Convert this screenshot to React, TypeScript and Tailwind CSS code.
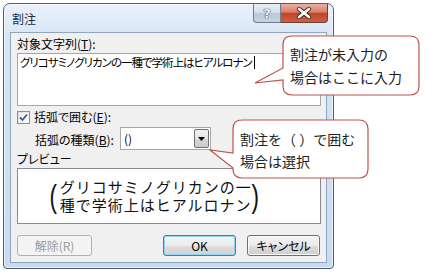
const jp = "font-['Noto_Sans_CJK_JP',sans-serif]"

const Callout1 = () => (
  <div className="absolute left-[254px] top-[35px] w-[167px] h-[62px]">
    <svg width="167" height="62" className="absolute left-0 top-0">
      <path
        d="M38 1 H156 Q165 1 165 10 V51 Q165 60 156 60 H38 Q29 60 29 51 V45 L1 48 L29 33 V10 Q29 1 38 1 Z"
        fill="#fff"
        stroke="#c0504d"
        strokeWidth="1.2"
      />
    </svg>
    <div className="absolute left-[36px] top-[8px] text-[14px] leading-[23px] text-[#222] whitespace-nowrap">
      <div>割注が未入力の</div>
      <div>場合はここに入力</div>
    </div>
  </div>
)

const Callout2 = () => (
  <div className="absolute left-[209px] top-[119px] w-[161px] h-[61px]">
    <svg width="161" height="61" className="absolute left-0 top-0">
      <path
        d="M33 1 H150 Q159 1 159 10 V50 Q159 59 150 59 H33 Q24 59 24 50 V49 L1 31 L24 34 V10 Q24 1 33 1 Z"
        fill="#fff"
        stroke="#c0504d"
        strokeWidth="1.2"
      />
    </svg>
    <div className="absolute left-[31px] top-[9px] text-[14px] leading-[22px] text-[#222] whitespace-nowrap">
      <div>割注を（ ）で囲む</div>
      <div>場合は選択</div>
    </div>
  </div>
)

const TitleButtons = () => (
  <div className="ml-auto mr-[5px] flex">
    <div className="w-[28px] h-[19px] border border-t-0 border-[#6b7c93] rounded-bl-[4px] bg-[linear-gradient(180deg,#eaeff5_0%,#d3dce7_50%,#bcc8d7_51%,#c7d3e1_100%)] flex items-center justify-center">
      <span className="text-[13px] leading-[13px] font-bold text-[#f4f6f9] [text-shadow:0_0_1px_#222,0_0_1px_#222] font-['DejaVu_Sans',sans-serif]">?</span>
    </div>
    <div className="w-[47px] h-[19px] border border-t-0 border-l-0 border-[#6b4136] rounded-br-[4px] bg-[linear-gradient(180deg,#eab0a2_0%,#d98068_45%,#c2432b_52%,#d0603f_100%)] flex items-center justify-center">
      <svg width="16" height="12" viewBox="0 0 16 12">
        <path d="M3 2 L13 10 M13 2 L3 10" stroke="#3a2420" strokeWidth="4.2" strokeLinecap="round" />
        <path d="M3 2 L13 10 M13 2 L3 10" stroke="#fff" strokeWidth="2.6" strokeLinecap="round" />
      </svg>
    </div>
  </div>
)

const btn =
  "h-[21px] rounded-[3px] border flex items-center justify-center text-[12px] leading-[14px]"

export default function App() {
  return (
    <div className={`relative w-[437px] h-[278px] bg-white pl-[3px] pt-[3px] overflow-hidden ${jp}`}>
      <div className="w-[331px] h-[266px] rounded-t-[7px] rounded-b-[4px] border border-[#4f5f73] bg-[linear-gradient(180deg,#eaf2fb_0%,#d8e6f5_12%,#c8dbf0_100%)] shadow-[inset_0_0_0_1px_rgba(255,255,255,0.55)] flex flex-col">
        <div className="h-[28px] flex items-start">
          <div className="pl-[8px] pt-[7px] text-[12px] leading-[16px] text-[#1b2c42]">割注</div>
          <TitleButtons />
        </div>

        <div className="mx-[6px] h-[231px] border border-[#8ea4bf] bg-[#f0f0f0] pl-[6px] pr-[5px] pt-[4px] text-[12px] text-black [font-feature-settings:'palt']">
          <div className="h-[14px] leading-[14px]">
            対象文字列(<span className="underline underline-offset-1">T</span>):
          </div>
          <div className="mt-[2px] h-[53px] border border-[#a3a8b0] bg-white pl-[2px] leading-[16px] flex items-start">
            <span className="text-[11.5px] tracking-[-1px]">グリコサミノグリカンの一種で学術上はヒアルロナン</span>
            <span className="ml-[2px] mt-[2px] w-[1px] h-[13px] bg-black" />
          </div>

          <div className="mt-[4px] h-[14px] flex items-center gap-[4px]">
            <div className="w-[13px] h-[13px] border border-[#8e8f8f] bg-[linear-gradient(135deg,#dcdcdc,#fbfbfb)] p-[1px]">
              <div className="w-full h-full bg-[linear-gradient(135deg,#e9ecef,#ffffff)] flex items-center justify-center">
                <svg width="9" height="9" viewBox="0 0 9 9">
                  <path d="M1 4.5 L3.5 7 L8 1.5" fill="none" stroke="#3d5a96" strokeWidth="1.8" />
                </svg>
              </div>
            </div>
            <span className="leading-[14px]">
              括弧で囲む(<span className="underline underline-offset-1">E</span>):
            </span>
          </div>

          <div className="mt-[3px] h-[23px] flex items-center pl-[18px]">
            <span className="w-[85px] leading-[14px] pt-[2px]">
              括弧の種類(<span className="underline underline-offset-1">B</span>):
            </span>
            <div className="w-[91px] h-[23px] border border-[#a7a7a7] bg-white flex items-center pl-[3px] pr-[1px]">
              <span className="leading-[14px]">()</span>
              <div className="ml-auto w-[15px] h-[19px] border border-[#707070] rounded-[2px] bg-[linear-gradient(180deg,#f2f2f2_0%,#e6e6e6_50%,#d6d6d6_51%,#cdcdcd_100%)] flex items-center justify-center">
                <svg width="7" height="4" viewBox="0 0 7 4">
                  <path d="M0 0 H7 L3.5 4 Z" fill="#000" />
                </svg>
              </div>
            </div>
          </div>

          <div className="mt-[2px] h-[14px] leading-[14px]">プレビュー</div>
          <div className="mt-[2px] h-[56px] border border-[#868b93] bg-white flex items-center pl-[30px] [font-feature-settings:normal]">
            <span className="text-[32px] leading-[34px] font-['Liberation_Sans',sans-serif] font-light text-[#111] scale-x-[0.7]">(</span>
            <div className="text-[15px] leading-[18px] tracking-[1px] text-[#111] ml-[1px]">
              <div>グリコサミノグリカンの一</div>
              <div>種で学術上はヒアルロナン</div>
            </div>
            <span className="text-[32px] leading-[34px] font-['Liberation_Sans',sans-serif] font-light text-[#111] scale-x-[0.7] ml-[-2px]">)</span>
          </div>

          <div className="mt-[11px] flex pr-[1px]">
            <div className={`${btn} w-[75px] border-[#adb2b5] bg-[#f4f4f4] text-[#9a9a9a]`}>解除(R)</div>
            <div className={`${btn} ml-auto w-[73px] border-[#3c7fb1] shadow-[inset_0_0_0_1px_#8fd6f5] bg-[linear-gradient(180deg,#f4f4f4_0%,#ececec_50%,#dedede_51%,#d2d2d2_100%)]`}>OK</div>
            <div className={`${btn} ml-[11px] w-[73px] border-[#707070] shadow-[inset_0_0_0_1px_#fbfbfb] bg-[linear-gradient(180deg,#f2f2f2_0%,#ebebeb_50%,#dddddd_51%,#cfcfcf_100%)]`}>キャンセル</div>
          </div>
        </div>
      </div>

      <Callout1 />
      <Callout2 />
    </div>
  )
}
